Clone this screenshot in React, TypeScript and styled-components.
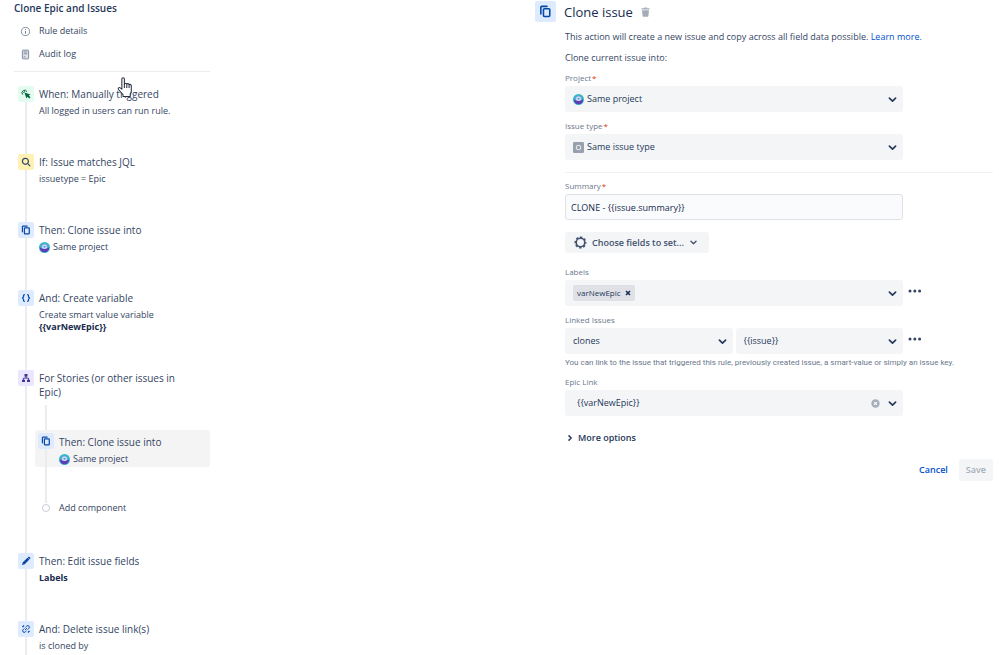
import React, { useState } from "react";
import styled, { createGlobalStyle, css } from "styled-components";

const GlobalStyle = createGlobalStyle`
  *, *::before, *::after { box-sizing: border-box; }
  body {
    margin: 0;
    background: #fff;
    color: #344563;
    font-family: "Open Sans", "Noto Sans", sans-serif;
    font-size: 9px;
    line-height: 14px;
  }
  button, input, select { font: inherit; color: inherit; margin: 0; }
  h1, h2, h3, p, ul, ol { margin: 0; padding: 0; font: inherit; }
  ul, ol { list-style: none; }
  svg { display: block; flex: none; }
`;

const Page = styled.div`
  display: grid;
  grid-template-columns: 521fr 458fr;
  min-height: 100vh;
  padding: 0 6px 0 14px;
`;

/* ---------- Sidebar ---------- */

const Sidebar = styled.aside`
  display: flex;
  flex-direction: column;
  max-width: 196px;
`;

const RuleName = styled.h1`
  font-size: 10px;
  font-weight: 600;
  line-height: 16px;
  color: #253858;
`;

const RuleNav = styled.nav`
  display: flex;
  flex-direction: column;
  gap: 9px;
  padding: 8px 0 10px 6px;
  margin-bottom: 14px;
  border-bottom: 1px solid #ebecf0;
`;

const NavItem = styled.a`
  display: flex;
  align-items: center;
  gap: 8px;
  color: inherit;
  text-decoration: none;
  svg { width: 11px; height: 11px; color: #7a869a; }
`;

const Steps = styled.ol`
  display: flex;
  flex: 1;
  flex-direction: column;
  padding-left: 4px;
`;

const StepItem = styled.li`
  display: flex;
  gap: 1px;
  &:last-child { flex: 1; }
`;

const Rail = styled.div`
  display: flex;
  flex: none;
  flex-direction: column;
  align-items: center;
  width: 16px;
`;

const RailLine = styled.div`
  flex: 1;
  width: 2px;
  background: #ebecf0;
`;

const tones = {
  green: ["#e3fcef", "#006644"],
  yellow: ["#fff0b3", "#344563"],
  blue: ["#deebff", "#0747a6"],
  purple: ["#eae6ff", "#403294"],
} as const;
type Tone = keyof typeof tones;

const Tile = styled.span<{ $tone: Tone; $large?: boolean }>`
  display: grid;
  place-items: center;
  flex: none;
  width: ${(p) => (p.$large ? 21 : 16)}px;
  height: ${(p) => (p.$large ? 21 : 16)}px;
  border-radius: 2px;
  background: ${(p) => tones[p.$tone][0]};
  color: ${(p) => tones[p.$tone][1]};
  svg { width: ${(p) => (p.$large ? 13 : 10)}px; height: ${(p) => (p.$large ? 13 : 10)}px; }
`;

const StepBody = styled.div<{ $last?: boolean }>`
  flex: 1;
  padding: 1px 0 ${(p) => (p.$last ? 0 : 37)}px;
`;

const StepText = styled.div`
  max-width: 160px;
  padding-left: 4px;
`;

const StepTitle = styled.h3`
  font-size: 10px;
  line-height: 14px;
  color: #344563;
`;

const StepDetail = styled.p`
  display: flex;
  flex-wrap: wrap;
  align-items: center;
  column-gap: 3px;
  margin-top: 4px;
  line-height: 12px;
  strong { flex-basis: 100%; font-weight: 700; color: #172b4d; }
`;

const Branch = styled.div`
  display: flex;
  flex-direction: column;
  padding: 6px 0 3px;
`;

const BranchLine = styled.div<{ $length: number }>`
  width: 2px;
  height: ${(p) => p.$length}px;
  margin-left: 10px;
  background: #ebecf0;
`;

const BranchCard = styled.div`
  display: flex;
  gap: 1px;
  padding-left: 3px;
  border-radius: 3px;
  background: #f4f4f5;
`;

const CardRail = styled(Rail)`
  padding-top: 3px;
`;

const CardBody = styled.div`
  padding: 5px 0 2px;
`;

const AddComponent = styled.button`
  display: flex;
  align-items: center;
  gap: 9px;
  height: 10px;
  padding: 0 0 0 7px;
  border: 0;
  background: none;
  cursor: pointer;
  &::before {
    content: "";
    width: 8px;
    height: 8px;
    border: 1px solid #c9cdd6;
    border-radius: 50%;
    background: #fff;
  }
`;

const Pointer = styled.svg`
  position: absolute;
  top: 77px;
  left: 117px;
  pointer-events: none;
`;

/* ---------- Action form ---------- */

const Main = styled.main`
  padding-top: 1px;
`;

const Header = styled.header`
  display: flex;
  align-items: center;
  gap: 8px;
`;

const Title = styled.h2`
  font-size: 13px;
  font-weight: 500;
  line-height: 20px;
  color: #172b4d;
`;

const IconButton = styled.button`
  display: grid;
  place-items: center;
  padding: 0;
  border: 0;
  background: none;
  color: #a5adba;
  cursor: pointer;
`;

const Form = styled.form`
  padding: 8px 0 0 30px;
`;

const Intro = styled.p`
  margin-bottom: 7px;
  white-space: nowrap;
  a { color: #0052cc; text-decoration: none; }
`;

const Field = styled.div`
  display: grid;
  grid-template-columns: 338fr 90fr;
  row-gap: 3px;
  margin-bottom: 8px;
`;

const Label = styled.label<{ $required?: boolean }>`
  grid-column: 1 / -1;
  font-size: 8px;
  font-weight: 500;
  line-height: 11px;
  color: #6b778c;
  ${(p) => p.$required && css`&::after { content: "*"; margin-left: 1px; color: #de350b; }`}
`;

const Help = styled.p`
  grid-column: 1 / -1;
  font-family: Roboto, "Open Sans", sans-serif;
  font-size: 8px;
  line-height: 11px;
  color: #6b778c;
  white-space: nowrap;
`;

const Split = styled.div`
  display: grid;
  grid-template-columns: 1fr 1fr;
  gap: 3px;
`;

const SelectBox = styled.div`
  display: grid;
  align-items: center;
  height: 26px;
  border-radius: 3px;
  background: #f4f5f7;
  > * { grid-area: 1 / 1; }
`;

const Select = styled.select<{ $inset?: number }>`
  width: 100%;
  height: 100%;
  padding: 0 26px 0 ${(p) => p.$inset ?? 8}px;
  border: 0;
  border-radius: 3px;
  appearance: none;
  background: transparent;
  color: #253858;
`;

const LeadIcon = styled.span`
  display: block;
  justify-self: start;
  margin-left: 8px;
  pointer-events: none;
`;

const EndIcons = styled.span`
  display: flex;
  align-items: center;
  justify-self: end;
  gap: 7px;
  margin-right: 5px;
  color: #253858;
  pointer-events: none;
  button { pointer-events: auto; }
`;

const TagArea = styled.div`
  display: flex;
  align-items: center;
  gap: 4px;
  padding: 0 26px 0 8px;
`;

const Tag = styled.span`
  display: flex;
  align-items: center;
  gap: 4px;
  height: 16px;
  padding: 0 4px;
  border-radius: 2px;
  background: #dfe1e6;
  font-size: 8px;
  color: #253858;
  button { color: #172b4d; }
`;

const TagInput = styled.input`
  flex: 1;
  min-width: 0;
  height: 20px;
  padding: 0;
  border: 0;
  outline: 0;
  background: transparent;
`;

const TextInput = styled.input`
  height: 26px;
  padding: 0 5px;
  border: 1px solid #dfe1e6;
  border-radius: 3px;
  background: #fafbfc;
  color: #172b4d;
`;

const MoreButton = styled(IconButton)`
  align-self: start;
  justify-self: start;
  width: 24px;
  height: 21px;
  color: #344563;
`;

const Divider = styled.hr`
  height: 1px;
  margin: 12px 0 7px;
  border: 0;
  background: #f1f2f4;
`;

const ChooseButton = styled.button`
  display: flex;
  align-items: center;
  gap: 5px;
  height: 21px;
  margin: 12px 0 13px;
  padding: 0 11px 0 9px;
  border: 0;
  border-radius: 3px;
  background: #f4f5f7;
  font-weight: 600;
  color: #42526e;
  cursor: pointer;
`;

const MoreOptions = styled.button`
  display: flex;
  align-items: center;
  gap: 4px;
  margin: 15px 0 14px;
  padding: 0 1px;
  border: 0;
  background: none;
  font-weight: 600;
  color: #253858;
  cursor: pointer;
`;

const Actions = styled.div`
  display: flex;
  justify-content: flex-end;
  gap: 4px;
`;

const ActionButton = styled.button<{ $link?: boolean }>`
  height: 22px;
  padding: 0 7px;
  border: 0;
  border-radius: 3px;
  background: ${(p) => (p.$link ? "none" : "#f4f5f7")};
  font-weight: 600;
  color: ${(p) => (p.$link ? "#0052cc" : "#a5adba")};
`;

/* ---------- Icons ---------- */

const InfoIcon = () => (
  <svg viewBox="0 0 12 12" fill="none" stroke="currentColor">
    <circle cx="6" cy="6" r="4.4" />
    <path d="M6 5.4v3M6 3.4v1" strokeWidth="1.1" />
  </svg>
);

const LogIcon = () => (
  <svg viewBox="0 0 12 12" fill="none" stroke="currentColor">
    <rect x="2.6" y="1.2" width="6.8" height="9.6" rx=".8" fill="#dfe1e6" />
    <path d="M4 3.2h4M4 5.2h4M4 8.6h2" />
  </svg>
);

const CopyIcon = () => (
  <svg viewBox="0 0 14 14" fill="none" stroke="currentColor" strokeWidth="1.7" strokeLinejoin="round">
    <path d="M2 9.6V2.6Q2 1.5 3.1 1.5H8.6" strokeLinecap="round" />
    <rect x="4.8" y="4" width="6.8" height="8.4" rx="1" />
  </svg>
);

const ClickIcon = () => (
  <svg viewBox="0 0 12 12" fill="none" stroke="currentColor">
    <path d="M4.2 4.2 11.3 6.6 9.4 7.9l2 2.1-1.5 1.5-2.1-2.1-1.3 2z" fill="currentColor" stroke="none" />
    <path d="M1.8 6.6A3.2 3.2 0 1 1 7.2 3.2M3.4 4.8a1.3 1.3 0 0 1 1.6-1.7" strokeWidth="1.2" />
  </svg>
);

const SearchIcon = () => (
  <svg viewBox="0 0 12 12" fill="none" stroke="currentColor" strokeWidth="1.4" strokeLinecap="round">
    <circle cx="5.3" cy="5.2" r="3.6" />
    <path d="m8.1 8 2.6 2.6" />
  </svg>
);

const BracesIcon = () => (
  <svg viewBox="0 0 12 12" fill="none" stroke="currentColor" strokeWidth="1.4" strokeLinejoin="round">
    <path d="M4.6 2H4.2Q3 2 3 3.2v1.5L1.8 6 3 7.3v1.5Q3 10 4.2 10h.4M7.4 2h.4Q9 2 9 3.2v1.5L10.2 6 9 7.3v1.5Q9 10 7.8 10h-.4" />
  </svg>
);

const TreeIcon = () => (
  <svg viewBox="0 0 12 12" fill="currentColor">
    <rect x="4.2" y="1.2" width="3.6" height="3.2" rx=".5" />
    <rect x="1.2" y="8" width="3.6" height="2.8" rx=".5" />
    <rect x="7.2" y="8" width="3.6" height="2.8" rx=".5" />
    <path d="M6 4v2.2M2.9 8.4V6.2h6.2v2.2" fill="none" stroke="currentColor" strokeWidth="1.1" />
  </svg>
);

const PencilIcon = () => (
  <svg viewBox="0 0 12 12" fill="currentColor">
    <path d="M8.2 1.8 9 1q.6-.4 1.2.1l.8.8q.5.6 0 1.2l-.8.8zM7.8 2.2l2.2 2.1L4.5 9.9 1.2 10.9l1-3.3z" />
  </svg>
);

const UnlinkIcon = () => (
  <svg viewBox="0 0 12 12" fill="none" stroke="currentColor" strokeWidth="1.2" strokeLinecap="round">
    <path d="M5.6 3.7 6.9 2.5a1.8 1.8 0 0 1 2.6 2.6L8.3 6.4M6.4 8.3 5.1 9.5a1.8 1.8 0 0 1-2.6-2.6l1.2-1.3M5.2 6.8l1.6-1.6M3.2 1.8v1M1.8 3.2h1M8.8 9.2v1M9.2 8.8h1" />
  </svg>
);

const ProjectIcon = () => (
  <svg width="11" height="11" viewBox="0 0 12 12">
    <circle cx="6" cy="6" r="6" fill="#35b8c8" />
    <path d="M.8 6.2h10.4Q10.6 10.8 6 11.2 1.4 10.8.8 6.2z" fill="#5b3db5" />
    <path d="M2.4 6.8V5.4a3.6 3.6 0 0 1 7.2 0v1.4z" fill="#7f9fe0" />
    <path d="M3.4 6.8V5.4a2.6 2.6 0 0 1 5.2 0v1.4Q6 8.4 3.4 6.8z" fill="#cfe6f8" />
    <circle cx="6" cy="5.2" r="1.1" fill="#5a8fd0" />
  </svg>
);

const IssueTypeIcon = () => (
  <svg width="11" height="11" viewBox="0 0 12 12">
    <rect width="12" height="12" rx="1.5" fill="#97a0af" />
    <circle cx="6" cy="6" r="2.4" fill="none" stroke="#e4e7ec" strokeWidth="1.1" />
  </svg>
);

const TrashIcon = () => (
  <svg width="9" height="10" viewBox="0 0 9 10" fill="currentColor">
    <path d="M.5 1.2H3L3.4.5h2.2l.4.7h2.5v1.3h-8zM1 3.2h7L7.4 9q-.1.7-.8.7H2.4q-.7 0-.8-.7z" />
  </svg>
);

const Chevron = ({ small }: { small?: boolean }) => (
  <svg width={small ? 9 : 11} height={small ? 9 : 11} viewBox="0 0 12 12" fill="none" stroke="currentColor" strokeWidth="1.8" strokeLinecap="round" strokeLinejoin="round">
    <path d="m2.6 4.4 3.4 3.3 3.4-3.3" />
  </svg>
);

const ChevronRight = () => (
  <svg width="8" height="8" viewBox="0 0 12 12" fill="none" stroke="currentColor" strokeWidth="2.2" strokeLinecap="round" strokeLinejoin="round">
    <path d="m4.5 2.8 3.3 3.2-3.3 3.2" />
  </svg>
);

const DotsIcon = () => (
  <svg width="14" height="4" viewBox="0 0 14 4" fill="currentColor">
    <circle cx="2" cy="2" r="1.5" />
    <circle cx="6.8" cy="2" r="1.5" />
    <circle cx="11.6" cy="2" r="1.5" />
  </svg>
);

const GearIcon = () => (
  <svg width="13" height="13" viewBox="0 0 14 14" fill="none" stroke="currentColor">
    <circle cx="7" cy="7" r="4.6" strokeWidth="1.7" />
    <circle cx="7" cy="7" r="5.7" strokeWidth="1.5" strokeDasharray="2.6 1.876" strokeDashoffset="1.3" />
  </svg>
);

const ClearIcon = () => (
  <svg width="9" height="9" viewBox="0 0 10 10">
    <circle cx="5" cy="5" r="4.6" fill="#a5adba" />
    <path d="m3.4 3.4 3.2 3.2M6.6 3.4 3.4 6.6" stroke="#fff" strokeWidth="1.2" />
  </svg>
);

const CrossIcon = () => (
  <svg width="6" height="6" viewBox="0 0 6 6" stroke="currentColor" strokeWidth="1.5">
    <path d="m1 1 4 4M5 1 1 5" />
  </svg>
);

/* ---------- Pieces ---------- */

type StepProps = {
  tone: Tone;
  icon: React.ReactNode;
  title: string;
  detail?: React.ReactNode;
  last?: boolean;
  children?: React.ReactNode;
};

const Step = ({ tone, icon, title, detail, last, children }: StepProps) => (
  <StepItem>
    <Rail>
      <Tile $tone={tone}>{icon}</Tile>
      <RailLine />
    </Rail>
    <StepBody $last={last}>
      <StepText>
        <StepTitle>{title}</StepTitle>
        {detail && <StepDetail>{detail}</StepDetail>}
      </StepText>
      {children}
    </StepBody>
  </StepItem>
);

const SameProject = () => (
  <>
    <ProjectIcon />
    Same project
  </>
);

type DropdownProps = { id?: string; value: string; icon?: React.ReactNode; inset?: number; label?: string; clearable?: boolean };

const Dropdown = ({ id, value, icon, inset, label, clearable }: DropdownProps) => (
  <SelectBox>
    <Select id={id} aria-label={label} $inset={inset} defaultValue={value}>
      <option>{value}</option>
    </Select>
    {icon && <LeadIcon>{icon}</LeadIcon>}
    <EndIcons>
      {clearable && (
        <IconButton type="button" aria-label="Clear">
          <ClearIcon />
        </IconButton>
      )}
      <Chevron />
    </EndIcons>
  </SelectBox>
);

const More = ({ label }: { label: string }) => (
  <MoreButton type="button" aria-label={label}>
    <DotsIcon />
  </MoreButton>
);

export default function App() {
  const [summary, setSummary] = useState("CLONE - {{issue.summary}}");

  return (
    <>
      <GlobalStyle />
      <Page>
        <Sidebar>
          <RuleName>Clone Epic and Issues</RuleName>
          <RuleNav>
            <NavItem href="#details"><InfoIcon />Rule details</NavItem>
            <NavItem href="#audit"><LogIcon />Audit log</NavItem>
          </RuleNav>
          <Steps>
            <Step tone="green" icon={<ClickIcon />} title="When: Manually triggered" detail="All logged in users can run rule." />
            <Step tone="yellow" icon={<SearchIcon />} title="If: Issue matches JQL" detail="issuetype = Epic" />
            <Step tone="blue" icon={<CopyIcon />} title="Then: Clone issue into" detail={<SameProject />} />
            <Step
              tone="blue"
              icon={<BracesIcon />}
              title="And: Create variable"
              detail={<>Create smart value variable <strong>{"{{varNewEpic}}"}</strong></>}
            />
            <Step tone="purple" icon={<TreeIcon />} title="For Stories (or other issues in Epic)">
              <Branch>
                <BranchLine $length={25} />
                <BranchCard>
                  <CardRail>
                    <Tile $tone="blue"><CopyIcon /></Tile>
                    <RailLine />
                  </CardRail>
                  <CardBody>
                    <StepText>
                      <StepTitle>Then: Clone issue into</StepTitle>
                      <StepDetail><SameProject /></StepDetail>
                    </StepText>
                  </CardBody>
                </BranchCard>
                <BranchLine $length={36} />
                <AddComponent type="button">Add component</AddComponent>
              </Branch>
            </Step>
            <Step tone="blue" icon={<PencilIcon />} title="Then: Edit issue fields" detail={<strong>Labels</strong>} />
            <Step tone="blue" icon={<UnlinkIcon />} title="And: Delete issue link(s)" detail="is cloned by" last />
          </Steps>
        </Sidebar>

        <Main>
          <Header>
            <Tile $tone="blue" $large><CopyIcon /></Tile>
            <Title>Clone issue</Title>
            <IconButton type="button" aria-label="Delete action"><TrashIcon /></IconButton>
          </Header>
          <Form onSubmit={(e) => e.preventDefault()}>
            <Intro>
              This action will create a new issue and copy across all field data possible. <a href="#learn">Learn more.</a>
            </Intro>
            <Intro>Clone current issue into:</Intro>

            <Field>
              <Label htmlFor="project" $required>Project</Label>
              <Dropdown id="project" value="Same project" icon={<ProjectIcon />} inset={22} />
            </Field>
            <Field>
              <Label htmlFor="type" $required>Issue type</Label>
              <Dropdown id="type" value="Same issue type" icon={<IssueTypeIcon />} inset={22} />
            </Field>

            <Divider />

            <Field>
              <Label htmlFor="summary" $required>Summary</Label>
              <TextInput id="summary" value={summary} onChange={(e) => setSummary(e.target.value)} />
            </Field>
            <ChooseButton type="button">
              <GearIcon />
              Choose fields to set...
              <Chevron small />
            </ChooseButton>

            <Field>
              <Label htmlFor="labels">Labels</Label>
              <SelectBox>
                <TagArea>
                  <Tag>
                    varNewEpic
                    <IconButton type="button" aria-label="Remove varNewEpic"><CrossIcon /></IconButton>
                  </Tag>
                  <TagInput id="labels" role="combobox" aria-expanded="false" />
                </TagArea>
                <EndIcons><Chevron /></EndIcons>
              </SelectBox>
              <More label="Labels actions" />
            </Field>

            <Field>
              <Label htmlFor="links">Linked Issues</Label>
              <Split>
                <Dropdown id="links" value="clones" />
                <Dropdown value="{{issue}}" label="Linked issue" />
              </Split>
              <More label="Linked Issues actions" />
              <Help>
                You can link to the issue that triggered this rule, previously created issue, a smart-value or simply an issue key.
              </Help>
            </Field>

            <Field>
              <Label htmlFor="epic">Epic Link</Label>
              <Dropdown id="epic" value="{{varNewEpic}}" inset={12} clearable />
            </Field>

            <MoreOptions type="button"><ChevronRight />More options</MoreOptions>
            <Actions>
              <ActionButton type="button" $link>Cancel</ActionButton>
              <ActionButton type="submit" disabled>Save</ActionButton>
            </Actions>
          </Form>
        </Main>
      </Page>
      <Pointer width="16" height="21" viewBox="0 0 15 20" fill="#fff" stroke="#253040" strokeLinejoin="round" aria-hidden="true">
        <path d="M4.5 11.5V2Q4.5.7 5.7.7T6.9 2v5Q7 5.9 8 5.9T9.2 7.1Q9.3 6.3 10.3 6.3T11.4 7.6Q11.6 7 12.4 7T13.5 8.3V13q0 1.6-1 3v2.6H5.6V16.8L1.3 11.9Q.6 10.9 1.4 10.3T3 10.4z" />
        <path d="M6.9 7v3.5M9.2 7.4v3.1M11.4 7.8v2.7" fill="none" />
      </Pointer>
    </>
  );
}
